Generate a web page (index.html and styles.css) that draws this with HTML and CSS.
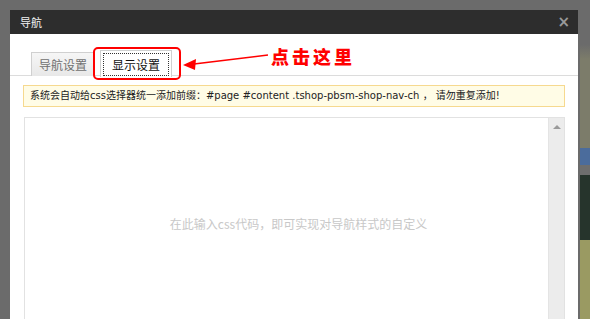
FILE: index.html
```html
<!DOCTYPE html>
<html lang="zh">
<head>
    <meta charset="UTF-8">
    <meta name="viewport" content="width=device-width, initial-scale=1.0">
    <title>导航</title>
    <link rel="stylesheet" href="styles.css">
</head>
<body>

    <div class="backdrop">
        <div class="dialog">
            <div class="dialog-head">
                <span class="dialog-title">导航</span>
                <span class="dialog-close">&#215;</span>
            </div>
            <div class="dialog-body">
                <div class="tabs">
                    <div class="tab">导航设置</div>
                    <div class="tab active"><span class="focus">显示设置</span></div>
                </div>

                <div class="notice">系统会自动给css选择器统一添加前缀：#page #content .tshop-pbsm-shop-nav-ch ， 请勿重复添加!</div>

                <div class="editor">
                    <div class="editor-text">在此输入css代码，即可实现对导航样式的自定义</div>
                    <div class="scrollbar"><span class="scroll-up"></span></div>
                </div>

                <!-- annotation drawn on top of the screenshot -->
                <div class="mark-box"></div>
                <svg class="mark-arrow" width="92" height="22" viewBox="0 0 92 22">
                    <line x1="86" y1="4" x2="12" y2="13" stroke="#f00" stroke-width="1.6"/>
                    <polygon points="1,14 14,8 13,19" fill="#f00"/>
                </svg>
                <div class="mark-text">点击这里</div>
            </div>
        </div>
        <div class="page-edge">
            <div class="edge edge-a"></div>
            <div class="edge edge-b"></div>
            <div class="edge edge-c"></div>
            <div class="edge edge-d"></div>
            <div class="edge edge-e"></div>
        </div>
    </div>

</body>
</html>
```

FILE: styles.css
```css
* {
    margin: 0;
    padding: 0;
    box-sizing: border-box;
    font-family: "DejaVu Sans", "Noto Sans CJK SC", sans-serif;
}

body {
    background: #6b6b6b;
    width: 590px;
    height: 319px;
    overflow: hidden;
}

.backdrop {
    display: flex;
    height: 319px;
    padding: 10px 0 0 10px;
}

.dialog {
    width: 568px;
    background: white;
    display: flex;
    flex-direction: column;
    flex-shrink: 0;
    overflow: hidden;
}

.dialog-head {
    height: 24px;
    flex-shrink: 0;
    background: #2d2d2d;
    display: flex;
    align-items: center;
    justify-content: space-between;
    padding: 0 8px 0 10px;
}

.dialog-title {
    color: #f2f2f2;
    font-size: 11px;
    font-family: "Noto Sans CJK SC", sans-serif;
}

.dialog-close {
    color: #9a9a9a;
    font-size: 15px;
    font-weight: bold;
}

.dialog-body {
    position: relative;
    flex: 1;
    padding-top: 16px;
    display: flex;
    flex-direction: column;
}

.tabs {
    display: flex;
    gap: 5px;
    padding-left: 21px;
    border-bottom: 1px solid #dcdcdc;
    height: 26px;
    flex-shrink: 0;
}

.tab {
    width: 64px;
    height: 24px;
    border: 1px solid #d0d0d0;
    border-bottom: none;
    background: linear-gradient(#f6f6f6, #e8e8e8);
    color: #707070;
    font-size: 12px;
    font-family: "Noto Sans CJK SC", sans-serif;
    display: flex;
    align-items: center;
    justify-content: center;
    margin-top: 2px;
}

.tab.active {
    width: 72px;
    background: white;
    color: #111;
    margin-top: 0;
    height: 27px;
}

.focus {
    border: 1px dotted #333;
    padding: 2px 5px;
    width: 66px;
    text-align: center;
}

.notice {
    margin: 9px 13px 0 13px;
    height: 22px;
    flex-shrink: 0;
    background: #fffce6;
    border: 1px solid #f6d98f;
    font-size: 10px;
    color: #222;
    line-height: 20px;
    padding-left: 6px;
    white-space: nowrap;
}

.editor {
    flex: 1;
    margin: 10px 13px 0 14px;
    border: 1px solid #e2e2e2;
    border-bottom: none;
    display: flex;
}

.editor-text {
    flex: 1;
    text-align: center;
    color: #c8c8c8;
    font-size: 12px;
    font-family: "Noto Sans CJK SC", sans-serif;
    padding: 97px 0 0 24px;
}

.scrollbar {
    width: 16px;
    background: #ececec;
    border-left: 1px solid #e4e4e4;
    display: flex;
    justify-content: center;
    padding-top: 7px;
}

.scroll-up {
    width: 0;
    height: 0;
    border-left: 4px solid transparent;
    border-right: 4px solid transparent;
    border-bottom: 4px solid #9a9a9a;
}

.mark-box {
    position: absolute;
    left: 83px;
    top: 13px;
    width: 88px;
    height: 33px;
    border: 2px solid #f00;
    border-radius: 5px;
}

.mark-arrow {
    position: absolute;
    left: 172px;
    top: 17px;
}

.mark-text {
    position: absolute;
    left: 261px;
    top: 10px;
    color: #f00;
    font-family: "Noto Sans CJK SC", sans-serif;
    font-weight: 900;
    font-size: 18px;
    letter-spacing: 3px;
    line-height: 24px;
}

.page-edge {
    margin-left: 2px;
    width: 10px;
    margin-top: -10px;
    display: flex;
    flex-direction: column;
}

.edge-a { height: 148px; background: linear-gradient(#6b6b6b 30%, #7c7c6a 40%); }
.edge-b { height: 17px; background: #4b6c9c; }
.edge-c { height: 10px; background: #6e6e6e; }
.edge-d { height: 65px; background: #26342c; }
.edge-e { flex: 1; background: #9a9a62; }
```
